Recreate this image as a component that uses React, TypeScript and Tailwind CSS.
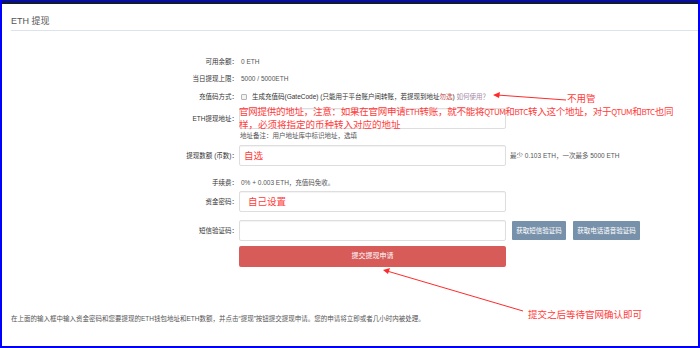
import React from 'react';

const Label = ({ children }: { children: React.ReactNode }) => (
  <div className="w-[237px] shrink-0 text-right pr-[1px] text-[#333]">{children}</div>
);

const Input = ({ hint, pad = 'pl-[4px]' }: { hint?: string; pad?: string }) => (
  <div className={`w-[267px] h-[21px] border border-[#dedede] rounded-[2px] bg-white shadow-[inset_0_1px_1px_rgba(0,0,0,0.05)] flex items-center ${pad}`}>
    {hint && <span className="text-[9.5px] text-[#ff3b3b] font-['Noto_Sans_CJK_SC',sans-serif]">{hint}</span>}
  </div>
);

const Lat = ({ children }: { children: React.ReactNode }) => (
  <span className="text-[8px] tracking-[-0.45px]">{children}</span>
);

const App = () => {
  return (
    <div className="relative w-[700px] h-[348px] overflow-hidden bg-white border-t border-l-2 border-r-2 border-b-2 border-[#0000ff] font-['Liberation_Sans','Noto_Sans_CJK_SC',sans-serif] text-[6.5px] text-[#555]">
      <div className="h-[3px] bg-[#0f1b38]" />
      <div className="ml-[9px] mt-[11px] pb-[3px] border-b border-[#dbe4ea] text-[9px] leading-[12px] text-[#555]">
        ETH 提现
      </div>

      <div className="flex flex-col">
        <div className="flex items-center h-[12px] mt-[25px]">
          <Label>可用余额：</Label>
          <div className="pl-[2px]">0 ETH</div>
        </div>
        <div className="flex items-center h-[12px] mt-[5px]">
          <Label>当日提现上限：</Label>
          <div className="pl-[2px]">5000 / 5000ETH</div>
        </div>
        <div className="flex items-center h-[12px] mt-[6px]">
          <Label>充值码方式：</Label>
          <div className="flex items-center pl-[2px] text-[#333]">
            <span className="w-[6px] h-[6px] border border-[#b5b5b5] bg-[#f3f3f3] rounded-[1px] mr-[5px]" />
            <span>
              生成充值码(GateCode) (只能用于平台账户间转账，若提现到地址<span className="text-[#c0504d]">勿选</span>)
              <span className="text-[#a58aa5]"> 如何使用？</span>
            </span>
          </div>
        </div>
        <div className="flex items-center mt-[5px]">
          <Label>ETH提现地址：</Label>
          <Input />
        </div>
        <div className="flex items-center h-[12px] mt-[1px]">
          <div className="w-[237px] shrink-0" />
          <div className="pl-[1px]">地址备注：用户地址库中标识地址，选填</div>
        </div>
        <div className="flex items-center mt-[3px]">
          <Label>提现数额 (币数)：</Label>
          <Input hint="自选" />
          <div className="pl-[4px]">最少 0.103 ETH，一次最多 5000 ETH</div>
        </div>
        <div className="flex items-center h-[12px] mt-[11px]">
          <Label>手续费：</Label>
          <div className="pl-[2px]">0% + 0.003 ETH，充值码免收。</div>
        </div>
        <div className="flex items-center mt-[2px]">
          <Label>资金密码：</Label>
          <Input hint="自己设置" pad="pl-[8px]" />
        </div>
        <div className="flex items-center mt-[8px]">
          <Label>短信验证码：</Label>
          <Input />
          <button className="ml-[6px] w-[54px] h-[19px] bg-[#7891aa] text-white text-[6.5px] rounded-[1px]">获取短信验证码</button>
          <button className="ml-[7px] w-[67px] h-[19px] bg-[#7891aa] text-white text-[6.5px] rounded-[1px]">获取电话语音验证码</button>
        </div>
        <div className="flex items-center mt-[5px]">
          <div className="w-[237px] shrink-0" />
          <button className="w-[267px] h-[21px] bg-[#d65b59] rounded-[2px] text-white text-[7px]">提交提现申请</button>
        </div>
        <div className="mt-[46px] ml-[9px] h-[12px] leading-[12px] flex items-center">
          在上面的输入框中输入资金密码和您要提现的ETH钱包地址和ETH数额，并点击“提现”按钮提交提现申请。您的申请将立即或者几小时内被处理。
        </div>
      </div>

      {/* red annotations */}
      <div className="absolute left-[237px] top-[104px] text-[9.5px] leading-[12px] tracking-[-0.25px] text-[#ff3b3b] font-['Noto_Sans_CJK_SC',sans-serif] whitespace-nowrap">
        <div>
          官网提供的地址，注意：如果在官网申请<Lat>ETH</Lat>转账，就不能将<Lat>QTUM</Lat>和<Lat>BTC</Lat>转入这个地址，对于<Lat>QTUM</Lat>和<Lat>BTC</Lat>也同
        </div>
        <div className="tracking-normal">样，必须将指定的币种转入对应的地址</div>
      </div>
      <div className="absolute left-[565px] top-[91px] text-[9.5px] leading-[12px] text-[#ff3b3b] font-['Noto_Sans_CJK_SC',sans-serif]">
        不用管
      </div>
      <div className="absolute left-[526px] top-[307px] text-[9.5px] leading-[12px] text-[#ff3b3b] font-['Noto_Sans_CJK_SC',sans-serif]">
        提交之后等待官网确认即可
      </div>
      <svg className="absolute left-[-2px] top-[-1px] pointer-events-none" width="700" height="348" viewBox="0 0 700 348">
        <line x1="566" y1="100" x2="497" y2="95" stroke="#ff2a2a" strokeWidth="1" />
        <polygon points="493,95 500,92 499,98" fill="#ff2a2a" />
        <line x1="523" y1="311" x2="387" y2="271" stroke="#ff2a2a" strokeWidth="1" />
        <polygon points="383,270 390,268 388,274" fill="#ff2a2a" />
      </svg>
    </div>
  );
};

export default App;
